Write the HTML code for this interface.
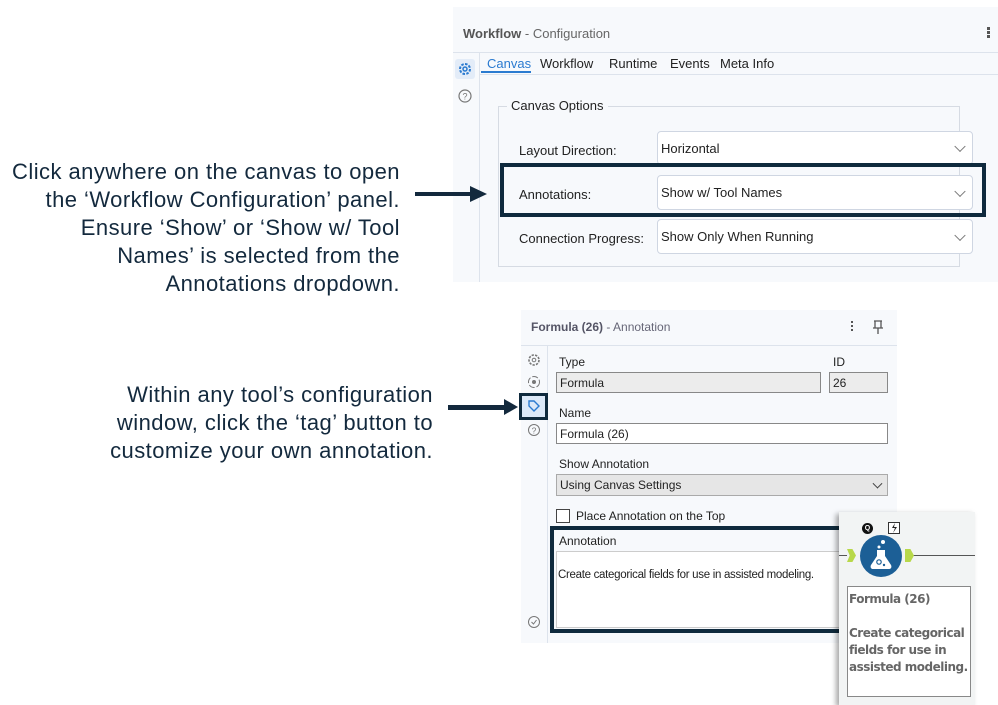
<!DOCTYPE html>
<html><head><meta charset="utf-8"><style>
*{margin:0;padding:0;box-sizing:border-box}
body{width:998px;height:705px;background:#fff;position:relative;overflow:hidden;font-family:"Liberation Sans",sans-serif;color:#222}
.a{position:absolute}
.big{font-size:22px;letter-spacing:0.45px;color:#13293d;text-align:right;line-height:28px;white-space:nowrap}
.t{font-size:13px;white-space:nowrap}
.dd{position:absolute;background:#fff;border:1px solid #cfd6e2;border-radius:4px;font-size:13px;padding-left:3px;display:flex;align-items:center}
.chev{position:absolute;right:8px;top:50%;width:8px;height:8px;border-right:1.5px solid #777;border-bottom:1.5px solid #777;transform:translateY(-70%) rotate(45deg)}
.in{position:absolute;border:1px solid #888;font-size:12px;padding-left:3px;display:flex;align-items:center}
</style></head><body>

<!-- left texts -->
<div class="a big" style="right:598px;top:158px">Click anywhere on the canvas to open<br>the ‘Workflow Configuration’ panel.<br>Ensure ‘Show’ or ‘Show w/ Tool<br>Names’ is selected from the<br>Annotations dropdown.</div>
<div class="a big" style="right:565px;top:381px">Within any tool’s configuration<br>window, click the ‘tag’ button to<br>customize your own annotation.</div>

<!-- TOP PANEL -->
<div class="a" style="left:453px;top:7px;width:545px;height:275px;background:#f7f9fc"></div>
<div class="a" style="left:453px;top:52px;width:545px;height:1px;background:#dde3ec"></div>
<div class="a t" style="left:463px;top:26px;color:#555"><b style="color:#555">Workflow</b> <span style="color:#666">- Configuration</span></div>
<div class="a" style="left:987px;top:27px;width:3px;height:3px;background:#555;box-shadow:0 4px #555,0 8px #555"></div>
<div class="a" style="left:479px;top:53px;width:1px;height:229px;background:#dde3ec"></div>
<div class="a" style="left:455px;top:59px;width:20px;height:20px;background:#e3ecf8;border-radius:3px"></div>
<svg class="a" style="left:457px;top:61px" width="16" height="16" viewBox="0 0 16 16"><circle cx="8" cy="8" r="5" fill="none" stroke="#2b7bd0" stroke-width="2" stroke-dasharray="2.6 1.3"/><circle cx="8" cy="8" r="2" fill="none" stroke="#2b7bd0" stroke-width="1.5"/></svg>
<svg class="a" style="left:458px;top:89px" width="14" height="14" viewBox="0 0 14 14"><circle cx="7" cy="7" r="6" fill="none" stroke="#777" stroke-width="1.2"/><text x="7" y="10.5" font-size="9" text-anchor="middle" fill="#777" font-family="Liberation Sans">?</text></svg>
<div class="a t" style="left:487px;top:56px;color:#2b7bd0">Canvas</div>
<div class="a" style="left:481px;top:71px;width:50px;height:2px;background:#2b7bd0"></div>
<div class="a" style="left:480px;top:74px;width:518px;height:1px;background:#dde3ec"></div>
<div class="a t" style="left:540px;top:56px;color:#222">Workflow</div>
<div class="a t" style="left:609px;top:56px;color:#222">Runtime</div>
<div class="a t" style="left:670px;top:56px;color:#222">Events</div>
<div class="a t" style="left:720px;top:56px;color:#222">Meta Info</div>
<div class="a" style="left:498px;top:106px;width:462px;height:161px;border:1px solid #d6dbe3"></div>
<div class="a t" style="left:507px;top:98px;background:#f7f9fc;padding:0 4px">Canvas Options</div>
<div class="a t" style="left:519px;top:143px">Layout Direction:</div>
<div class="dd" style="left:657px;top:131px;width:316px;height:34px">Horizontal<i class="chev"></i></div>
<div class="a t" style="left:519px;top:187px">Annotations:</div>
<div class="dd" style="left:657px;top:175px;width:316px;height:35px">Show w/ Tool Names<i class="chev"></i></div>
<div class="a t" style="left:519px;top:231px">Connection Progress:</div>
<div class="dd" style="left:657px;top:219px;width:316px;height:35px">Show Only When Running<i class="chev"></i></div>
<div class="a" style="left:500px;top:163px;width:486px;height:54px;border:4px solid #0f2a3d"></div>

<!-- arrow 1 -->
<div class="a" style="left:415px;top:192px;width:58px;height:4px;background:#13293d"></div>
<div class="a" style="left:470px;top:186px;border-left:17px solid #13293d;border-top:8px solid transparent;border-bottom:8px solid transparent"></div>

<!-- BOTTOM PANEL -->
<div class="a" style="left:521px;top:310px;width:376px;height:333px;background:#f7f9fc"></div>
<div class="a" style="left:521px;top:345px;width:376px;height:1px;background:#dde3ec"></div>
<div class="a" style="left:547px;top:346px;width:1px;height:297px;background:#dde3ec"></div>
<div class="a" style="font-size:12px;left:531px;top:320px;color:#556"><b>Formula (26)</b> <span style="color:#667">- Annotation</span></div>
<div class="a" style="left:851px;top:321px;width:2px;height:2px;background:#555;box-shadow:0 4px #555,0 8px #555"></div>
<svg class="a" style="left:872px;top:320px" width="12" height="14" viewBox="0 0 12 14"><path d="M2 1h8M3 1v7h6V1M1 8h10M6 8v6" fill="none" stroke="#555" stroke-width="1.3"/></svg>
<svg class="a" style="left:527px;top:353px" width="14" height="14" viewBox="0 0 14 14"><circle cx="7" cy="7" r="5" fill="none" stroke="#777" stroke-width="1.6" stroke-dasharray="2.3 1.2"/><circle cx="7" cy="7" r="1.8" fill="none" stroke="#777"/></svg>
<svg class="a" style="left:527px;top:375px" width="14" height="14" viewBox="0 0 14 14"><circle cx="7" cy="7" r="5.5" fill="none" stroke="#777" stroke-dasharray="6 2"/><circle cx="7" cy="7" r="2" fill="#777"/></svg>
<div class="a" style="left:519px;top:393px;width:29px;height:27px;border:3px solid #0f2a3d;background:#dce9f8"></div>
<svg class="a" style="left:527px;top:399px" width="14" height="14" viewBox="0 0 14 14"><path d="M2 2h5l5 5-5 5-5-5z" fill="none" stroke="#2b7bd0" stroke-width="1.4"/></svg>
<svg class="a" style="left:527px;top:423px" width="14" height="14" viewBox="0 0 14 14"><circle cx="7" cy="7" r="5.5" fill="none" stroke="#777"/><text x="7" y="10.5" font-size="8.5" text-anchor="middle" fill="#777" font-family="Liberation Sans">?</text></svg>
<svg class="a" style="left:527px;top:615px" width="14" height="14" viewBox="0 0 14 14"><circle cx="7" cy="7" r="5.5" fill="none" stroke="#777"/><path d="M4.5 7l2 2 3-4" fill="none" stroke="#777"/></svg>

<!-- arrow 2 -->
<div class="a" style="left:448px;top:405px;width:58px;height:5px;background:#13293d"></div>
<div class="a" style="left:504px;top:399px;border-left:14px solid #13293d;border-top:8px solid transparent;border-bottom:8px solid transparent"></div>

<div class="a" style="left:559px;top:355px;font-size:12px">Type</div>
<div class="a" style="left:833px;top:355px;font-size:12px">ID</div>
<div class="in" style="left:556px;top:372px;width:265px;height:21px;background:#ececec">Formula</div>
<div class="in" style="left:829px;top:372px;width:59px;height:21px;background:#ececec">26</div>
<div class="a" style="left:559px;top:406px;font-size:12px">Name</div>
<div class="in" style="left:556px;top:423px;width:332px;height:21px;background:#fff">Formula (26)</div>
<div class="a" style="left:559px;top:457px;font-size:12px">Show Annotation</div>
<div class="in" style="left:556px;top:474px;width:332px;height:22px;background:#e6e6e6;border-color:#aaa">Using Canvas Settings<i class="chev" style="right:6px;width:7px;height:7px;border-color:#444;border-width:1px"></i></div>
<div class="a" style="left:556px;top:509px;width:14px;height:14px;border:1px solid #444;background:#fff"></div>
<div class="a" style="left:576px;top:509px;font-size:12px">Place Annotation on the Top</div>
<div class="a" style="left:550px;top:526px;width:300px;height:107px;border:4px solid #0f2a3d"></div>
<div class="a" style="left:559px;top:534px;font-size:12px">Annotation</div>
<div class="a" style="left:556px;top:551px;width:290px;height:77px;background:#fff;border:1px solid #ccc"></div>
<div class="a" style="left:558px;top:569px;font-size:11.5px;letter-spacing:-0.3px;white-space:nowrap">Create categorical fields for use in assisted modeling.</div>

<!-- tool card -->
<div class="a" style="left:839px;top:512px;width:136px;height:193px;background:#f2f4f4;box-shadow:-3px 2px 5px rgba(0,0,0,.35)"></div>
<div class="a" style="left:905px;top:555px;width:70px;height:1px;background:#555"></div>
<div class="a" style="left:839px;top:555px;width:8px;height:1px;background:#555"></div>
<div class="a" style="left:847px;top:549px;width:9px;height:13px;background:#b8d84a;clip-path:polygon(0 0,60% 0,100% 50%,60% 100%,0 100%,30% 50%)"></div>
<div class="a" style="left:905px;top:549px;width:9px;height:13px;background:#b8d84a;clip-path:polygon(0 0,60% 0,100% 50%,60% 100%,0 100%)"></div>
<div class="a" style="left:860px;top:535px;width:42px;height:42px;border-radius:50%;background:#1c5f96"></div>
<svg class="a" style="left:866px;top:538px" width="30" height="36" viewBox="0 0 30 36"><circle cx="17" cy="4" r="2" fill="#fff"/><circle cx="13" cy="9" r="1.5" fill="#fff"/><path d="M11 12h8v6l6 9c1 2 0 4-2 4H7c-2 0-3-2-2-4l6-9z" fill="#fff"/><circle cx="13" cy="24" r="2.2" fill="none" stroke="#1c5f96" stroke-width="1.2"/><circle cx="18" cy="27" r="1.2" fill="#1c5f96"/></svg>
<div class="a" style="left:862px;top:523px;width:11px;height:11px;border-radius:50%;background:#111;color:#fff;font-size:7px;font-weight:bold;text-align:center;line-height:11px">Q</div>
<div class="a" style="left:888px;top:522px;width:12px;height:12px;border:1px solid #333;background:#fff"></div>
<svg class="a" style="left:889px;top:523px" width="10" height="10" viewBox="0 0 10 10"><path d="M6 0L3 5h3L4 10l4-6H5z" fill="#222"/></svg>
<div class="a" style="left:847px;top:586px;width:124px;height:111px;background:#fff;border:1px solid #888"></div>
<div class="a" style="left:849px;top:591px;font-size:12px;font-weight:bold;color:#666;line-height:17px;font-family:'DejaVu Sans',sans-serif;letter-spacing:-0.5px;white-space:nowrap">Formula (26)<br><br>Create categorical<br>fields for use in<br>assisted modeling.</div>
</body></html>
